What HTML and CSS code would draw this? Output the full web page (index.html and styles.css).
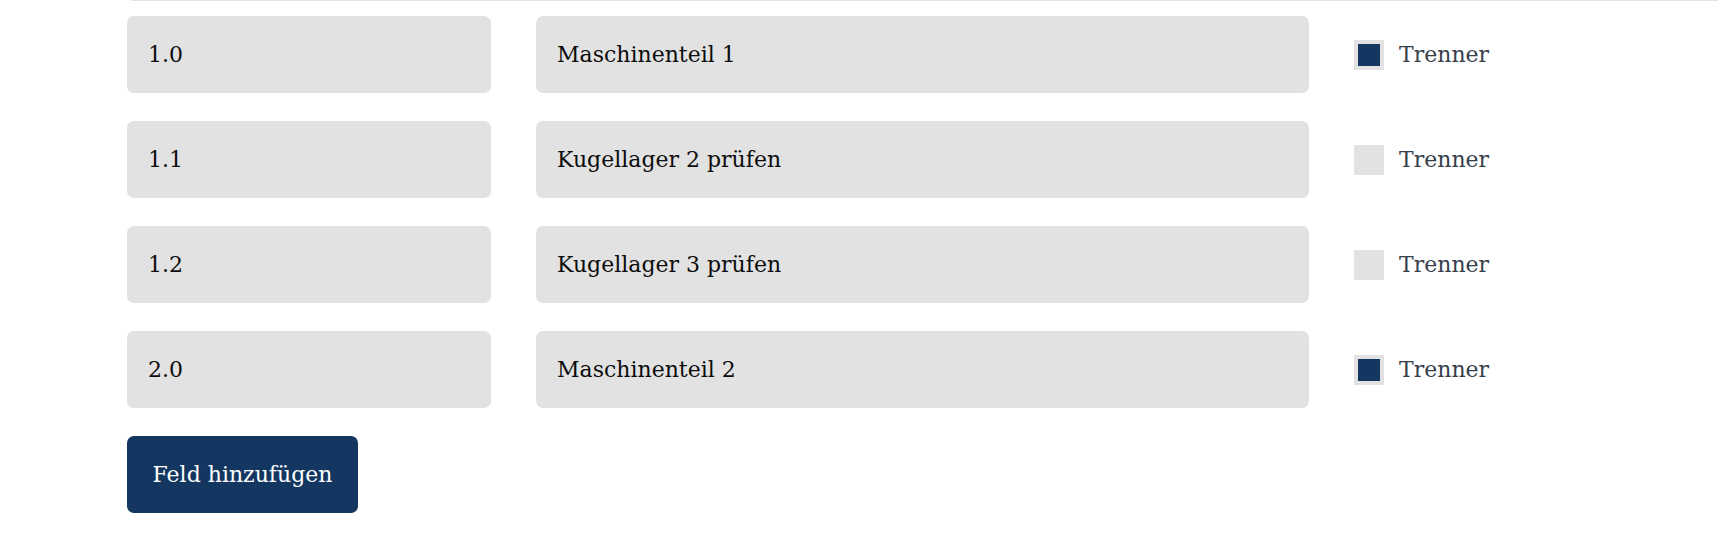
FILE: index.html
```html
<!DOCTYPE html>
<html lang="de">
<head>
<meta charset="utf-8">
<title>Felder</title>
<link rel="stylesheet" href="styles.css">
</head>
<body>
<div class="topline"></div>
<div class="fields">
  <div class="row">
    <input class="field field-num" type="text" value="1.0" readonly>
    <input class="field field-name" type="text" value="Maschinenteil 1" readonly>
    <label class="sep"><input class="check" type="checkbox" checked><span class="sep-text">Trenner</span></label>
  </div>
  <div class="row">
    <input class="field field-num" type="text" value="1.1" readonly>
    <input class="field field-name" type="text" value="Kugellager 2 prüfen" readonly>
    <label class="sep"><input class="check" type="checkbox"><span class="sep-text">Trenner</span></label>
  </div>
  <div class="row">
    <input class="field field-num" type="text" value="1.2" readonly>
    <input class="field field-name" type="text" value="Kugellager 3 prüfen" readonly>
    <label class="sep"><input class="check" type="checkbox"><span class="sep-text">Trenner</span></label>
  </div>
  <div class="row">
    <input class="field field-num" type="text" value="2.0" readonly>
    <input class="field field-name" type="text" value="Maschinenteil 2" readonly>
    <label class="sep"><input class="check" type="checkbox" checked><span class="sep-text">Trenner</span></label>
  </div>
  <div class="actions">
    <button class="btn" type="button">Feld hinzufügen</button>
  </div>
</div>
</body>
</html>
```
FILE: styles.css
```css
html, body {
  margin: 0;
  padding: 0;
  background: #ffffff;
}
body {
  width: 1718px;
  height: 558px;
  overflow: hidden;
  font-family: "DejaVu Serif", serif;
}
.topline {
  margin-left: 131px;
  height: 1px;
  border-top: 1px solid #e4e4e4;
}
.fields {
  padding-left: 127px;
  padding-top: 14px;
  display: flex;
  flex-direction: column;
  gap: 28px;
}
.row {
  display: grid;
  grid-template-columns: 364px 773px auto;
  column-gap: 45px;
  align-items: center;
  height: 77px;
}
.field {
  box-sizing: border-box;
  height: 77px;
  width: 100%;
  margin: 0;
  border: none;
  border-radius: 7px;
  background: #e2e2e2;
  padding: 0 20px 0 21px;
  font-family: inherit;
  font-size: 22px;
  color: #0d0d0d;
  outline: none;
}
.sep {
  display: flex;
  align-items: center;
  gap: 15px;
}
.check {
  appearance: none;
  -webkit-appearance: none;
  box-sizing: border-box;
  width: 30px;
  height: 30px;
  margin: 0;
  background: #e2e2e2;
  border: 4.5px solid #e2e2e2;
}
.check:checked {
  background: #143761;
}
.sep-text {
  font-size: 22px;
  color: #36404b;
}
.actions {
  display: flex;
}
.btn {
  height: 77px;
  width: 231px;
  margin: 0;
  border: none;
  border-radius: 7px;
  background: #143761;
  color: #ffffff;
  font-family: inherit;
  font-size: 22px;
  padding: 0;
}
```
